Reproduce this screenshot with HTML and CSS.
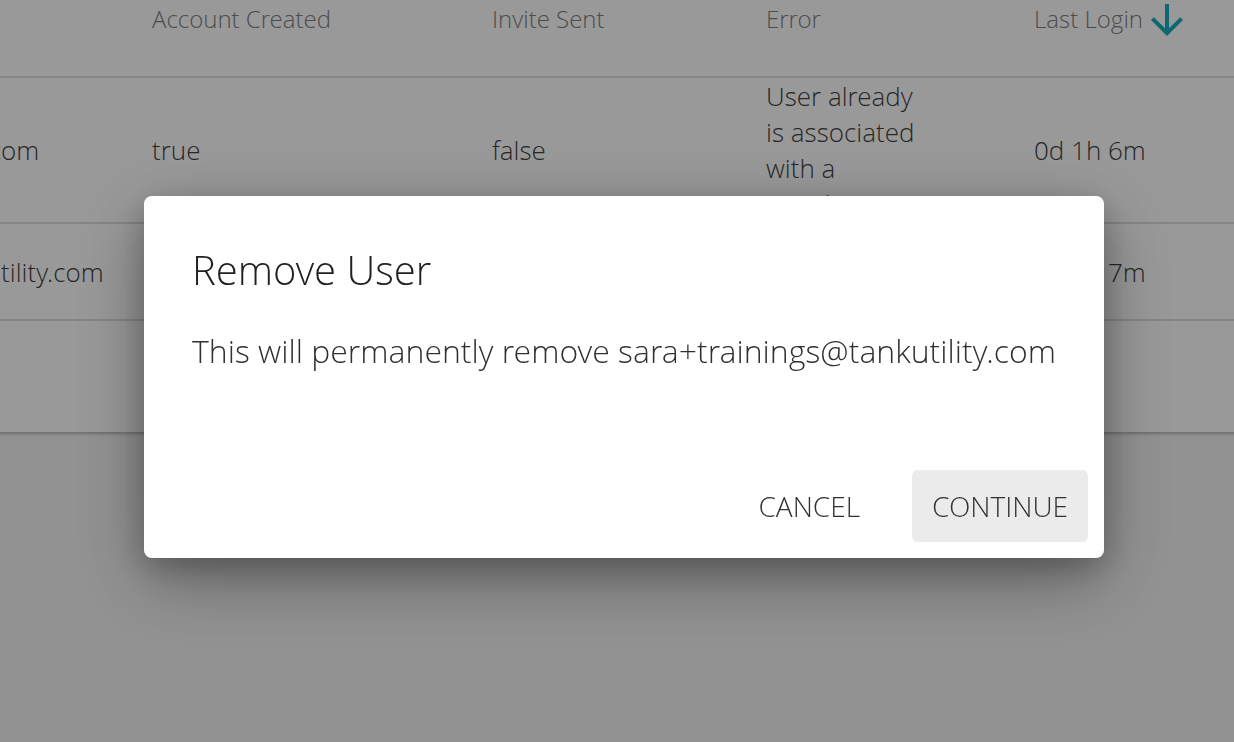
FILE: index.html
```html
<!DOCTYPE html>
<html>
<head>
  <title>Users</title>
  <link rel="stylesheet" href="styles.css">
</head>
<body>
  <div class="page">
    <div class="card">
      <table class="users">
        <thead>
          <tr>
            <th class="col-email">Email</th>
            <th class="col-created">Account Created</th>
            <th class="col-invite">Invite Sent</th>
            <th class="col-error">Error</th>
            <th class="col-login sorted">Last Login
              <svg class="sort-icon" viewBox="0 0 24 24" width="48" height="48"><path d="M20 12l-1.41-1.41L13 16.17V4h-2v12.17l-5.58-5.59L4 12l8 8 8-8z"/></svg>
            </th>
          </tr>
        </thead>
        <tbody>
          <tr class="row-tall">
            <td>sara+1st@tankutility.com</td>
            <td>true</td>
            <td>false</td>
            <td><div class="error-text">User already is associated with a supplier.</div></td>
            <td>0d 1h 6m</td>
          </tr>
          <tr class="row-short">
            <td>sara+trainings@tankutility.com</td>
            <td>true</td>
            <td>true</td>
            <td></td>
            <td>0d 1h 7m</td>
          </tr>
          <tr class="row-empty">
            <td colspan="5"></td>
          </tr>
        </tbody>
      </table>
    </div>
  </div>

  <!-- remove user confirmation -->
  <div class="backdrop">
    <div class="dialog">
      <h2 class="dialog-title">Remove User</h2>
      <div class="dialog-body">
        <p>This will permanently remove sara+trainings@tankutility.com</p>
      </div>
      <div class="dialog-actions">
        <button class="btn">Cancel</button>
        <button class="btn btn-focus">Continue</button>
      </div>
    </div>
  </div>
</body>
</html>
```
FILE: styles.css
```css
body {
  margin: 0;
  padding: 0;
  background-color: #f4f4f4;
  font-family: 'Open Sans Light', 'Open Sans', 'Liberation Sans', sans-serif;
  font-weight: 300;
  color: #424242;
  overflow: hidden;
}

.page {
  height: 100vh;
  overflow: hidden;
}

.card {
  background-color: #fff;
  margin-left: -252px;
  width: 1524px;
  box-shadow: 0 2px 3px rgba(0, 0, 0, 0.25);
}

.users {
  border-collapse: collapse;
  table-layout: fixed;
  width: 100%;
  font-size: 26px;
}

.users th,
.users td {
  text-align: left;
  padding: 0;
  border-bottom: 2px solid #dedede;
  white-space: nowrap;
}

.users th {
  font-size: 24px;
  font-weight: 300;
  color: #808080;
  height: 76px;
  vertical-align: top;
  line-height: 38px;
}

.col-email { width: 404px; }
.col-created { width: 340px; }
.col-invite { width: 274px; }
.col-error { width: 268px; }
.col-login { width: 238px; }

.sorted {
  color: #16adbd;
}

.sort-icon {
  fill: #16adbd;
  vertical-align: middle;
  margin: -4px 0 0 -6px;
}

.row-tall td {
  height: 143px;
}

.row-short td {
  height: 95px;
}

.row-empty td {
  height: 111px;
  border-bottom: none;
}

.error-text {
  width: 152px;
  white-space: normal;
  line-height: 36px;
  height: 144px;
  overflow: hidden;
}

.backdrop {
  position: fixed;
  inset: 0;
  background-color: rgba(0, 0, 0, 0.4);
  display: flex;
  align-items: center;
  justify-content: center;
  padding: 12px 0 0 14px;
}

.dialog {
  width: 960px;
  background-color: #fff;
  border-radius: 8px;
  box-shadow: 0 22px 70px rgba(0, 0, 0, 0.35), 0 10px 28px rgba(0, 0, 0, 0.2);
}

.dialog-title {
  margin: 0;
  padding: 48px 48px 0;
  font-size: 40px;
  font-weight: 300;
  line-height: 52px;
  color: #212121;
}

.dialog-body {
  padding: 32px 48px 80px;
}

.dialog-body p {
  margin: 0;
  font-size: 32px;
  line-height: 46px;
  color: #303030;
}

.dialog-actions {
  display: flex;
  justify-content: flex-end;
  gap: 32px;
  padding: 16px;
}

.btn {
  font-family: 'Open Sans Light', 'Open Sans', 'Liberation Sans', sans-serif;
  font-weight: 300;
  font-size: 28px;
  text-transform: uppercase;
  color: #303030;
  background: none;
  border: none;
  border-radius: 6px;
  height: 72px;
  padding: 0 20px;
}

.btn-focus {
  background-color: #ebebeb;
}
```
